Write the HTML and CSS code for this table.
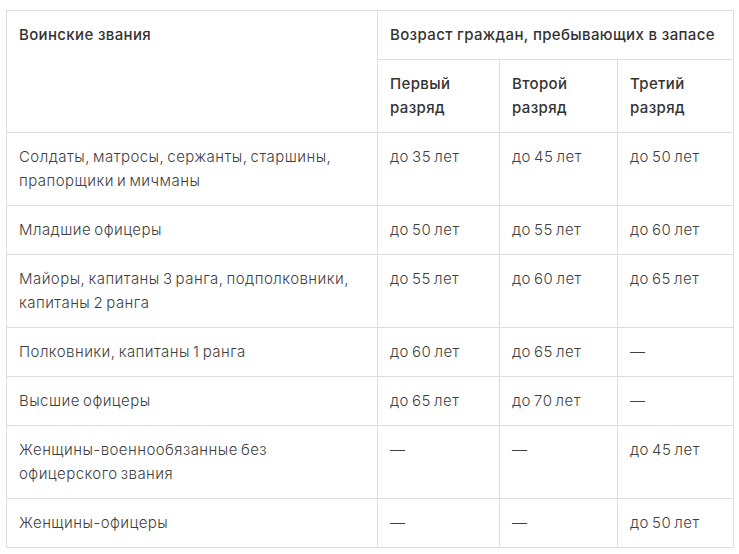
FILE: index.html
```html
<!DOCTYPE html>
<html lang="ru">
<head>
<meta charset="utf-8">
<link rel="stylesheet" href="styles.css">
</head>
<body>
<table class="ranks">
  <colgroup>
    <col class="c1"><col class="c2"><col class="c3"><col class="c4">
  </colgroup>
  <thead>
    <tr>
      <th rowspan="2">Воинские звания</th>
      <th colspan="3" class="nowrap">Возраст граждан, пребывающих в запасе</th>
    </tr>
    <tr>
      <th>Первый разряд</th>
      <th>Второй разряд</th>
      <th>Третий разряд</th>
    </tr>
  </thead>
  <tbody>
    <tr><td>Солдаты, матросы, сержанты, старшины, прапорщики и мичманы</td><td>до 35 лет</td><td>до 45 лет</td><td>до 50 лет</td></tr>
    <tr><td>Младшие офицеры</td><td>до 50 лет</td><td>до 55 лет</td><td>до 60 лет</td></tr>
    <tr><td>Майоры, капитаны 3 ранга, подполковники, капитаны 2 ранга</td><td>до 55 лет</td><td>до 60 лет</td><td>до 65 лет</td></tr>
    <tr><td>Полковники, капитаны 1 ранга</td><td>до 60 лет</td><td>до 65 лет</td><td>—</td></tr>
    <tr><td>Высшие офицеры</td><td>до 65 лет</td><td>до 70 лет</td><td>—</td></tr>
    <tr><td>Женщины-военнообязанные без офицерского звания</td><td>—</td><td>—</td><td>до 45 лет</td></tr>
    <tr><td>Женщины-офицеры</td><td>—</td><td>—</td><td>до 50 лет</td></tr>
  </tbody>
</table>
</body>
</html>
```
FILE: styles.css
```css
html, body {
  margin: 0;
  background: #fff;
}
body {
  padding: 10px 6px 0 6px;
  font-family: Inter, "Noto Sans", sans-serif;
  font-size: 15px;
  line-height: 24px;
  color: #444;
}
.ranks {
  border-collapse: collapse;
  table-layout: fixed;
  width: 727px;
}
.c1 { width: 371px; }
.c2 { width: 122px; }
.c3 { width: 118px; }
.c4 { width: 116px; }
.ranks th, .ranks td {
  border: 1px solid #dedede;
  padding: 12px 12px;
  text-align: left;
  vertical-align: top;
}
.ranks th {
  font-size: 15px;
  font-weight: 500;
  color: #333;
  letter-spacing: 0.35px;
}
.nowrap {
  white-space: nowrap;
}
.ranks td {
  font-weight: 300;
  color: #3f3f3f;
  letter-spacing: 0.45px;
  word-spacing: -1.5px;
}
```
